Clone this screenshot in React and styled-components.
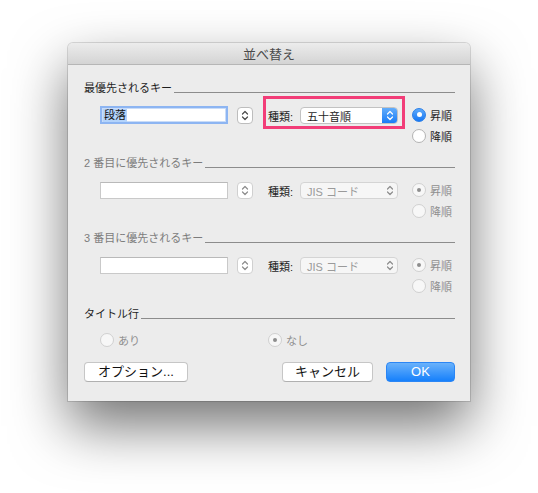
import React from "react";
import styled, { createGlobalStyle, css } from "styled-components";

const Global = createGlobalStyle`
  html, body { margin: 0; padding: 0; background: #ffffff; }
  body {
    font-family: "Liberation Sans", "Noto Sans CJK JP", sans-serif;
    font-size: 11px;
    color: #1e1e1e;
  }
`;

const Page = styled.div`
  height: 493px;
  box-sizing: border-box;
  padding: 43px 0 0 68px;
  overflow: hidden;
`;

const Window = styled.div`
  width: 402px;
  background: #ececec;
  border-radius: 5px 5px 0 0;
  box-shadow: 0 0 0 1px rgba(0, 0, 0, 0.13), 0 25px 55px rgba(0, 0, 0, 0.55);
  display: flex;
  flex-direction: column;
`;

const TitleBar = styled.div`
  height: 22px;
  box-sizing: border-box;
  border-bottom: 1px solid #b6b6b6;
  border-radius: 5px 5px 0 0;
  background: linear-gradient(#ececec, #d4d4d4);
  display: flex;
  align-items: center;
  justify-content: center;
  font-size: 13px;
  color: #4a4a4a;
`;

const Body = styled.div`
  padding: 15px 15px 19px 16px;
  display: flex;
  flex-direction: column;
`;

const Header = styled.div`
  display: flex;
  align-items: flex-end;
  height: 16px;
  margin-top: ${(p) => p.$gap}px;
  color: ${(p) => (p.$dim ? "#7c7c7c" : "#1e1e1e")};
`;

const HeaderText = styled.span`
  line-height: 16px;
  white-space: nowrap;
`;

const Rule = styled.span`
  flex: 1;
  height: 1px;
  background: #8c8c8c;
  margin: 0 0 3px 2px;
`;

const KeyRow = styled.div`
  display: flex;
  align-items: flex-start;
  padding-left: 16px;
`;

const Field = styled.div`
  width: 128px;
  box-sizing: border-box;
  background: #fff;
  display: flex;
  align-items: center;
  padding-left: 1px;
  ${(p) =>
    p.$focus
      ? css`
          height: 18px;
          margin-top: 10px;
          border: 2px solid #8db5f2;
          box-shadow: inset 0 0 0 1px #c9dcf8;
        `
      : css`
          height: 17px;
          margin-top: 11px;
          border: 1px solid #c9c9c9;
          border-top-color: #b9b9b9;
        `}
`;

const Selected = styled.span`
  background: #b3d3fb;
  line-height: 13px;
  padding: 0 1px;
  color: #111;
`;

const Stepper = styled.div`
  width: 16px;
  height: 17px;
  box-sizing: border-box;
  margin: 11px 0 0 9px;
  border: 1px solid ${(p) => (p.$dim ? "#d0d0d0" : "#bdbdbd")};
  border-radius: 4px;
  background: #fff;
  display: flex;
  align-items: center;
  justify-content: center;
`;

const KindBox = styled.div`
  margin-left: 10px;
  border: 3px solid ${(p) => (p.$mark ? "#f23d78" : "transparent")};
  padding: 8px 4px 2px 2px;
  display: flex;
  align-items: center;
`;

const KindLabel = styled.span`
  width: 32px;
  color: #1e1e1e;
  white-space: nowrap;
`;

const Popup = styled.div`
  width: 98px;
  height: 17px;
  box-sizing: border-box;
  border-radius: 4px;
  border: 1px solid ${(p) => (p.$dim ? "#d4d4d4" : "#c2c2c2")};
  background: ${(p) => (p.$dim ? "#f6f6f6" : "#fff")};
  color: ${(p) => (p.$dim ? "#9a9a9a" : "#1e1e1e")};
  display: flex;
  align-items: center;
  padding-left: 6px;
  position: relative;
  overflow: hidden;
`;

const PopupText = styled.span`
  flex: 1;
  white-space: nowrap;
`;

const PopupArrow = styled.span`
  width: 16px;
  align-self: stretch;
  margin: -1px -1px -1px 0;
  border-radius: 0 4px 4px 0;
  display: flex;
  align-items: center;
  justify-content: center;
  ${(p) =>
    p.$dim
      ? css`
          background: transparent;
        `
      : css`
          background: linear-gradient(#68b0fb, #1479f6);
        `}
`;

const Choices = styled.div`
  display: flex;
  flex-direction: column;
  margin: 8px 0 0 7px;
`;

const Choice = styled.label`
  display: flex;
  align-items: center;
  gap: 4px;
  height: 21px;
  color: ${(p) => (p.$dim ? "#8f8f8f" : "#1e1e1e")};
  white-space: nowrap;
`;

const Dot = styled.span`
  width: 14px;
  height: 14px;
  box-sizing: border-box;
  border-radius: 50%;
  display: flex;
  align-items: center;
  justify-content: center;
  flex: none;
  ${(p) =>
    p.$dim
      ? css`
          background: #f7f7f7;
          border: 1px solid #d0d0d0;
        `
      : p.$on
      ? css`
          background: linear-gradient(#5eaafb, #1677f4);
          border: 1px solid #2a7fe8;
        `
      : css`
          background: #fff;
          border: 1px solid #b3b3b3;
        `}
  &::after {
    content: "";
    display: ${(p) => (p.$on ? "block" : "none")};
    width: ${(p) => (p.$dim ? 4 : 5)}px;
    height: ${(p) => (p.$dim ? 4 : 5)}px;
    border-radius: 50%;
    background: ${(p) => (p.$dim ? "#8e8e8e" : "#fff")};
  }
`;

const TitleChoices = styled.div`
  display: grid;
  grid-template-columns: 168px auto;
  margin: 7px 0 0 16px;
  height: 20px;
  align-items: center;
`;

const ButtonRow = styled.div`
  display: flex;
  align-items: center;
  margin-top: 13px;
  gap: 13px;
`;

const Button = styled.button`
  height: 20px;
  width: ${(p) => p.$w}px;
  box-sizing: border-box;
  padding: 0;
  border-radius: 4px;
  font-family: "Liberation Sans", "Noto Sans CJK JP", sans-serif;
  font-size: 13px;
  line-height: 18px;
  ${(p) =>
    p.$primary
      ? css`
          border: 1px solid #2b86f5;
          background: linear-gradient(#6ab2fb, #1680fb);
          color: #fff;
          font-weight: 500;
        `
      : css`
          border: 1px solid #c6c6c6;
          border-bottom-color: #b0b0b0;
          background: #fff;
          color: #111;
        `}
  ${(p) =>
    p.$push &&
    css`
      margin-left: auto;
    `}
`;

const UpDown = ({ color, w = 14, h = 15 }) => {
  const cx = w / 2;
  const cy = h / 2;
  return (
    <svg width={w} height={h} viewBox={`0 0 ${w} ${h}`}>
      <path
        d={`M${cx - 2.5} ${cy - 1.5} L${cx} ${cy - 4} L${cx + 2.5} ${cy - 1.5}`}
        fill="none"
        stroke={color}
        strokeWidth="1.2"
        strokeLinecap="round"
        strokeLinejoin="round"
      />
      <path
        d={`M${cx - 2.5} ${cy + 1.5} L${cx} ${cy + 4} L${cx + 2.5} ${cy + 1.5}`}
        fill="none"
        stroke={color}
        strokeWidth="1.2"
        strokeLinecap="round"
        strokeLinejoin="round"
      />
    </svg>
  );
};

const sortKeys = [
  { title: "最優先されるキー", value: "段落", kind: "五十音順", active: true, gap: 0 },
  { title: "2 番目に優先されるキー", value: "", kind: "JIS コード", active: false, gap: 9 },
  { title: "3 番目に優先されるキー", value: "", kind: "JIS コード", active: false, gap: 9 },
];

const SortKey = ({ title, value, kind, active, gap }) => (
  <>
    <Header $gap={gap} $dim={!active}>
      <HeaderText>{title}</HeaderText>
      <Rule />
    </Header>
    <KeyRow>
      <Field $focus={active}>{value && <Selected>{value}</Selected>}</Field>
      <Stepper $dim={!active}>
        <UpDown color={active ? "#4a4a4a" : "#8c8c8c"} />
      </Stepper>
      <KindBox $mark={active}>
        <KindLabel>種類:</KindLabel>
        <Popup $dim={!active}>
          <PopupText>{kind}</PopupText>
          <PopupArrow $dim={!active}>
            <UpDown color={active ? "#ffffff" : "#8c8c8c"} w={16} h={17} />
          </PopupArrow>
        </Popup>
      </KindBox>
      <Choices>
        <Choice $dim={!active}>
          <Dot $on $dim={!active} />
          昇順
        </Choice>
        <Choice $dim={!active}>
          <Dot $dim={!active} />
          降順
        </Choice>
      </Choices>
    </KeyRow>
  </>
);

export default function App() {
  return (
    <>
      <Global />
      <Page>
        <Window>
          <TitleBar>並べ替え</TitleBar>
          <Body>
            {sortKeys.map((k) => (
              <SortKey key={k.title} {...k} />
            ))}
            <Header $gap={10}>
              <HeaderText>タイトル行</HeaderText>
              <Rule />
            </Header>
            <TitleChoices>
              <Choice $dim>
                <Dot $dim />
                あり
              </Choice>
              <Choice $dim>
                <Dot $dim $on />
                なし
              </Choice>
            </TitleChoices>
            <ButtonRow>
              <Button $w={104}>オプション...</Button>
              <Button $w={91} $push>
                キャンセル
              </Button>
              <Button $w={69} $primary>
                OK
              </Button>
            </ButtonRow>
          </Body>
        </Window>
      </Page>
    </>
  );
}
